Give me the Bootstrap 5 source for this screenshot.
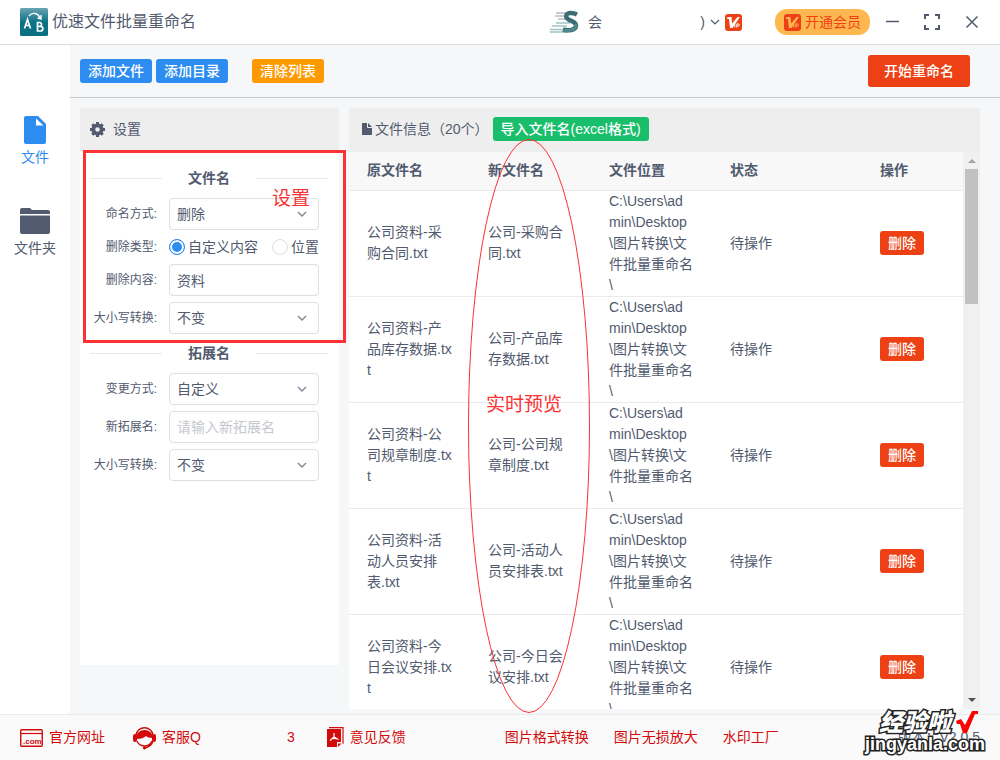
<!DOCTYPE html>
<html lang="zh-CN">
<head>
<meta charset="utf-8">
<meta name="viewport" content="width=device-width, initial-scale=1">
<title>优速文件批量重命名</title>
<link rel="stylesheet" href="https://cdn.jsdelivr.net/npm/bootstrap@5.3.0/dist/css/bootstrap.min.css">
<style>
  body { font: 14px/21px "Liberation Sans", "Noto Sans CJK SC", sans-serif; color: #515a6e; background: #f5f7f9; --ann: #fb3234; }
  svg { display: block; flex: none; }
  .body-row, .work { min-height: 0; }
  .min-w-0 { min-width: 0; }
  .titlebar { height: 45px; border-bottom: 1px solid #dcdcdc; padding: 0 20px; }
  .app-title { font-size: 16px; line-height: 24px; }
  .user-area { width: 192px; margin-right: 33px; }
  .vip-btn { background: #ffb84f; color: #ed4014; border-radius: 12px; height: 26px; padding: 0 9px; border: 0; margin-right: 14px; }
  .vip-btn svg { color: #ffb84f; }
  .win-btn { border: 0; background: none; padding: 0; width: 16px; height: 16px; }
  .side { width: 70px; padding-top: 71px; }
  .side a { color: #515a6e; text-decoration: none; height: 91px; gap: 3px; }
  .side a.active { color: #2d8cf0; }
  .toolbar { height: 53px; border-bottom: 1px solid #c8c8c8; padding: 0 30px 0 10px; }
  .btn { --bs-btn-font-size: 14px; --bs-btn-line-height: 22px; --bs-btn-padding-x: 7px; --bs-btn-padding-y: 0; --bs-btn-border-radius: 3px; --bs-btn-color: #fff; --bs-btn-font-weight: 500; flex: none; }
  .btn-blue { background: #2d8cf0; } .btn-orange { background: #ff9900; } .btn-green { background: #19be6b; } .btn-red { background: #ed4014; }
  .btn-start { --bs-btn-padding-x: 15px; --bs-btn-line-height: 30px; }
  .work { padding: 10px 20px 5px 10px; gap: 10px; }
  .settings-panel { width: 259px; margin-bottom: 44px; }
  .panel-head { height: 44px; background: #eee; flex: none; padding: 0 10px 2px; }
  .group-title { font-weight: 700; margin: 0 11px 9px 10px; }
  .group-title i { height: 1px; width: 72px; background: #e8eaec; }
  .group-next { margin-top: 9px; }
  .field { display: grid; grid-template-columns: 77px 150px; column-gap: 12px; align-items: center; margin-bottom: 6px; min-height: 22px; }
  .field > label, .field > .lbl { font-size: 12px; text-align: right; white-space: nowrap; }
  .form-control, .form-select { height: 32px; font-size: 14px; line-height: 20px; padding: 5px 7px; border: 1px solid #dcdee2; border-radius: 4px; color: #515a6e; }
  .form-control::placeholder { color: #c5c8ce; }
  .form-select { background-image: url("data:image/svg+xml,%3Csvg xmlns='http://www.w3.org/2000/svg' viewBox='0 0 10 10'%3E%3Cpath d='M1 3l4 4 4-4' fill='none' stroke='%23808695' stroke-width='1.4'/%3E%3C/svg%3E"); background-size: 10px; background-position: right 11px center; }
  .form-check-input { width: 16px; height: 16px; margin: 0; border: 1px solid #dcdee2; flex: none; }
  .form-check-input + label { margin-left: 3px; }
  .form-check-input:checked { background: #2d8cf0 none; border-color: #2d8cf0; box-shadow: inset 0 0 0 2px #fff; }
  .ann { color: var(--ann); font-size: 19px; line-height: 24px; position: absolute; white-space: nowrap; }
  .ann-set { left: 192px; top: 35px; }
  .ann-preview { left: 137px; top: 285px; }
  .ann-box { position: absolute; inset: -2px -7px auto 3px; height: 193px; border: 3px solid var(--ann); pointer-events: none; }
  .ann-oval { position: absolute; left: 119px; top: 31px; pointer-events: none; }
  .files { table-layout: fixed; color: inherit; margin: 0; }
  .files > :not(caption) > * > * { padding: 0 18px; border-bottom: 1px solid #e8eaec; color: inherit; vertical-align: middle; word-break: break-all; background: none; box-shadow: none; }
  .files > thead > tr > th { height: 38px; background: #f8f8f9; font-weight: 700; }
  .files tbody tr { height: 106px; }
  .c-name { width: 121px; } .c-state { width: 150px; }
  .scroll-track { width: 17px; background: #f0f0f0; padding: 7px 2px; flex: none; }
  .scroll-thumb { height: 135px; background: #c1c1c1; margin-top: 6px; }
  .foot { height: 46px; border-top: 1px solid #e8eaec; background: #fafafa; padding: 0 20px; }
  .foot a { color: #d20a0a; text-decoration: none; white-space: nowrap; }
  .foot > a { gap: 6px; margin-right: 28px; }
  .mask-gap { width: 74px; }
  .foot-links { gap: 25px; margin-left: 71px; }
  .stamp { position: absolute; right: 15px; bottom: 6px; color: #fff; font-weight: 900; text-align: right; paint-order: stroke fill; -webkit-text-stroke: 3px #222; }
  .stamp .cn { font-size: 24px; line-height: 24px; padding-right: 34px; }
  .stamp .en { font-size: 18px; line-height: 19px; }
  .stamp svg { position: absolute; right: 6px; top: -1px; }
</style>
</head>
<body class="vh-100 d-flex flex-column overflow-hidden">
<svg class="d-none">
  <symbol id="vip" viewBox="0 0 17 17"><rect width="17" height="17" rx="3" fill="#ed4014"/><path d="M2.500 3h4l.6 6.500L12.500 3H15L7.500 14H5L4 5H2z" fill="currentColor"/><path d="M9.800 9.500v4M11.800 13.500v-3.600h1.400a1 1 0 0 1 0 2.200h-1.400" fill="none" stroke="currentColor" stroke-width="1"/></symbol>
</svg>

<header class="titlebar bg-white d-flex align-items-center flex-shrink-0">
  <svg width="28" height="28" viewBox="0 0 28 28"><defs><linearGradient id="lg" x2="0" y2="1"><stop stop-color="#6aa3b2"/><stop offset=".5" stop-color="#0d7188"/><stop offset="1" stop-color="#086f80"/></linearGradient></defs><rect width="28" height="28" rx="1.500" fill="url(#lg)"/><path d="M4.500 20.500L7.500 11.500l3 9M5.500 17.500h4M17.500 14.500v8.500h3a2.300 2.300 0 0 0 0-4.600h-3h2.500a2 2 0 0 0 0-3.900z" fill="none" stroke="#fff" stroke-width="1.700"/><path d="M9 8c3-4 9-3.500 11 2M17.500 10l3.500 1V7" fill="none" stroke="#fff" stroke-width="1.400"/></svg>
  <span class="app-title ms-1">优速文件批量重命名</span>
  <div class="user-area d-flex align-items-center ms-auto">
    <svg width="30" height="24" viewBox="0 0 30 24"><path d="M6 3h12M5 6h9M8 9h8" stroke="#b5bcc4" stroke-width="1.300"/><path d="M6 13h14M2 16h15M0 19.500h18M0 22h18" stroke="#9dc4c6" stroke-width="1.300"/><path d="M27 4.500C21 1.500 15 3 16.500 7.500c1.200 3.500 9.500 3 9.500 8 0 5-8 5.500-13 4" fill="none" stroke="#3e6c74" stroke-width="4.500"/><path d="M25.500 14c1.500 5-4 7-12 6.500" fill="none" stroke="#4d8a8e" stroke-width="3"/></svg>
    <span class="ms-2">会</span>
    <span class="ms-auto">)</span>
    <svg class="ms-1" width="12" height="12" viewBox="0 0 12 12"><path d="M2 4l4 4 4-4" fill="none" stroke="#515a6e" stroke-width="1.200"/></svg>
    <svg class="ms-1 text-white" width="17" height="17"><use href="#vip"/></svg>
  </div>
  <button class="vip-btn d-flex align-items-center"><svg width="17" height="17"><use href="#vip"/></svg><span class="ms-1">开通会员</span></button>
  <div class="d-flex gap-4">
    <button class="win-btn" aria-label="最小化"><svg width="16" height="16" viewBox="0 0 16 16"><path d="M2 7.500h13" stroke="#515a6e" stroke-width="1.500"/></svg></button>
    <button class="win-btn" aria-label="最大化"><svg width="16" height="16" viewBox="0 0 16 16"><path d="M1 5V1h4M11 1h4v4M15 11v4h-4M5 15H1v-4" fill="none" stroke="#515a6e" stroke-width="2"/></svg></button>
    <button class="win-btn" aria-label="关闭"><svg width="16" height="16" viewBox="0 0 16 16"><path d="M2.500 2.500l11 11M13.500 2.500l-11 11" stroke="#515a6e" stroke-width="1.500"/></svg></button>
  </div>
</header>

<div class="body-row d-flex flex-grow-1">
  <nav class="side bg-white d-flex flex-column flex-shrink-0">
    <a class="active d-flex flex-column align-items-center" href="#"><svg width="22" height="28" viewBox="0 0 22 28"><path d="M2 0h12l8 8v18a2 2 0 0 1-2 2H2a2 2 0 0 1-2-2V2a2 2 0 0 1 2-2z" fill="#2d8cf0"/><path d="M12 2.500v7h7.500z" fill="#fff"/></svg><span>文件</span></a>
    <a class="d-flex flex-column align-items-center" href="#"><svg width="30" height="28" viewBox="0 0 30 28"><path d="M0 7V3a2 2 0 0 1 2-2h8l2 2h16a2 2 0 0 1 2 2v2zM0 8.500h30V25a2 2 0 0 1-2 2H2a2 2 0 0 1-2-2z" fill="#515a6e"/></svg><span>文件夹</span></a>
  </nav>

  <main class="min-w-0 flex-grow-1 d-flex flex-column">
    <div class="toolbar d-flex align-items-center flex-shrink-0">
      <button class="btn btn-blue">添加文件</button>
      <button class="btn btn-blue ms-1">添加目录</button>
      <button class="btn btn-orange ms-4">清除列表</button>
      <button class="btn btn-red btn-start ms-auto">开始重命名</button>
    </div>

    <div class="work d-flex flex-grow-1">
      <section class="settings-panel bg-white flex-shrink-0">
        <div class="panel-head d-flex align-items-center">
          <svg width="15" height="15" viewBox="0 0 16 16"><circle cx="8" cy="8" r="4.300" fill="none" stroke="#515a6e" stroke-width="4.400"/><path d="M8 0v16M0 8h16M2.400 2.400l11.200 11.200M13.600 2.400L2.400 13.600" stroke="#515a6e" stroke-width="3.200"/><circle cx="8" cy="8" r="2.400" fill="#eee"/></svg>
          <span class="ms-1 ps-1">设置</span>
        </div>
        <form>
          <div class="position-relative pt-3">
            <div class="group-title d-flex align-items-center justify-content-between"><i></i><span>文件名</span><i></i></div>
            <div class="field"><label for="mode">命名方式:</label><select id="mode" class="form-select"><option>删除</option></select></div>
            <div class="field"><span class="lbl">删除类型:</span>
              <div class="d-flex align-items-center text-nowrap">
                <input class="form-check-input" type="radio" name="kind" id="k1" checked><label for="k1">自定义内容</label>
                <input class="form-check-input ms-auto" type="radio" name="kind" id="k2"><label for="k2">位置</label>
              </div></div>
            <div class="field"><label for="content">删除内容:</label><input id="content" class="form-control" value="资料"></div>
            <div class="field mb-0"><label for="case1">大小写转换:</label><select id="case1" class="form-select"><option>不变</option></select></div>
            <div class="ann-box"></div>
            <span class="ann ann-set">设置</span>
          </div>
          <div class="group-title group-next d-flex align-items-center justify-content-between"><i></i><span>拓展名</span><i></i></div>
          <div class="field"><label for="extmode">变更方式:</label><select id="extmode" class="form-select"><option>自定义</option></select></div>
          <div class="field"><label for="ext">新拓展名:</label><input id="ext" class="form-control" placeholder="请输入新拓展名"></div>
          <div class="field"><label for="case2">大小写转换:</label><select id="case2" class="form-select"><option>不变</option></select></div>
        </form>
      </section>

      <section class="min-w-0 flex-grow-1 d-flex flex-column position-relative">
        <div class="panel-head d-flex align-items-center">
          <svg width="16" height="14" viewBox="0 0 16 14"><path d="M3 1h6l4 4v8H3z" fill="#515a6e"/><path d="M8.500 1v4.500H13" fill="none" stroke="#eee"/></svg>
          <span>文件信息（20个）</span>
          <button class="btn btn-green ms-1">导入文件名(excel格式)</button>
        </div>
        <div class="body-row d-flex flex-grow-1 overflow-hidden bg-white">
          <div class="flex-grow-1 overflow-hidden">
            <table class="table files">
              <colgroup><col class="c-name"><col class="c-name"><col class="c-name"><col class="c-state"><col></colgroup>
              <thead><tr><th>原文件名</th><th>新文件名</th><th>文件位置</th><th>状态</th><th>操作</th></tr></thead>
              <tbody>
                <tr><td>公司资料-采购合同.txt</td><td>公司-采购合同.txt</td><td>C:\Users\admin\Desktop<wbr>\图片转换\文件批量重命名\</td><td>待操作</td><td><button class="btn btn-red">删除</button></td></tr>
                <tr><td>公司资料-产品库存数据.txt</td><td>公司-产品库存数据.txt</td><td>C:\Users\admin\Desktop<wbr>\图片转换\文件批量重命名\</td><td>待操作</td><td><button class="btn btn-red">删除</button></td></tr>
                <tr><td>公司资料-公司规章制度.txt</td><td>公司-公司规章制度.txt</td><td>C:\Users\admin\Desktop<wbr>\图片转换\文件批量重命名\</td><td>待操作</td><td><button class="btn btn-red">删除</button></td></tr>
                <tr><td>公司资料-活动人员安排表.txt</td><td>公司-活动人员安排表.txt</td><td>C:\Users\admin\Desktop<wbr>\图片转换\文件批量重命名\</td><td>待操作</td><td><button class="btn btn-red">删除</button></td></tr>
                <tr><td>公司资料-今日会议安排.txt</td><td>公司-今日会议安排.txt</td><td>C:\Users\admin\Desktop<wbr>\图片转换\文件批量重命名\</td><td>待操作</td><td><button class="btn btn-red">删除</button></td></tr>
              </tbody>
            </table>
          </div>
          <div class="scroll-track d-flex flex-column">
            <svg class="mx-auto" width="8" height="4" viewBox="0 0 8 4"><path d="M0 4l4-4 4 4z" fill="#a3a3a3"/></svg>
            <div class="scroll-thumb"></div>
            <svg class="mx-auto mt-auto" width="8" height="4" viewBox="0 0 8 4"><path d="M0 0l4 4 4-4z" fill="#505050"/></svg>
          </div>
        </div>
        <svg class="ann-oval" width="122" height="574" viewBox="0 0 122 574"><ellipse cx="61" cy="287" rx="60.500" ry="286.500" fill="none" stroke="#fb3234"/></svg>
        <span class="ann ann-preview">实时预览</span>
      </section>
    </div>
  </main>
</div>

<footer class="foot d-flex align-items-center flex-shrink-0 position-relative">
  <a class="d-flex align-items-center" href="#"><svg width="23" height="18" viewBox="0 0 23 18"><rect x=".75" y=".75" width="21.500" height="16.500" rx="1" fill="none" stroke="#d20a0a" stroke-width="1.400"/><path d="M1 4.500h21" stroke="#d20a0a" stroke-width="1.200"/><text x="3" y="14.500" font-size="8" font-weight="700" fill="#d20a0a" font-family="Liberation Sans">.com</text></svg><span>官方网址</span></a>
  <a class="d-flex align-items-center" href="#"><svg width="23" height="24" viewBox="0 0 23 24"><path d="M3 9a8.600 8.600 0 0 1 17 0" fill="none" stroke="#d20a0a" stroke-width="1.500"/><path d="M3 12a8.500 8 0 0 1 17 0c-4 0-6-1-7-2-2 2-5 3-10 3z" fill="#d20a0a"/><rect x="0" y="8" width="4" height="8" rx="2" fill="#d20a0a"/><rect x="19" y="8" width="4" height="8" rx="2" fill="#d20a0a"/><path d="M4 15c2 6 12 7 15 0M20 15c-1 4-4 6-8 7" fill="none" stroke="#d20a0a" stroke-width="1.300"/><circle cx="11.500" cy="21.800" r="1.700" fill="#d20a0a"/></svg><span>客服Q</span><span class="mask-gap"></span><span>3</span></a>
  <a class="d-flex align-items-center" href="#"><svg width="21" height="21" viewBox="-4 0 21 21"><path d="M2 .7h14v16" fill="none" stroke="#d20a0a" stroke-width="1.200"/><path d="M0 2h14v13h-4v5H0z" fill="#d20a0a"/><path d="M11 16.500h3.500L11 20z" fill="#d20a0a"/><path d="M7 6v4l-4 3.500M7 10l4.500 2.500M4 12c2-1 4-1 7 0" fill="none" stroke="#fff" stroke-width="1.200"/></svg><span>意见反馈</span></a>
  <div class="foot-links d-flex"><a href="#">图片格式转换</a><a href="#">图片无损放大</a><a href="#">水印工厂</a></div>
  <span class="ms-auto text-nowrap">版本：V2.0.5</span>
  <div class="stamp"><div class="cn fst-italic">经验啦</div><div class="en">jingyanla.com</div><svg width="24" height="24" viewBox="0 0 24 24"><path d="M1 11l5-2 4 6L17 1h6v3h-3L12 23H8L5 14H2z" fill="#f00"/></svg></div>
</footer>
<script src="https://cdn.jsdelivr.net/npm/bootstrap@5.3.0/dist/js/bootstrap.bundle.min.js"></script>
</body>
</html>
